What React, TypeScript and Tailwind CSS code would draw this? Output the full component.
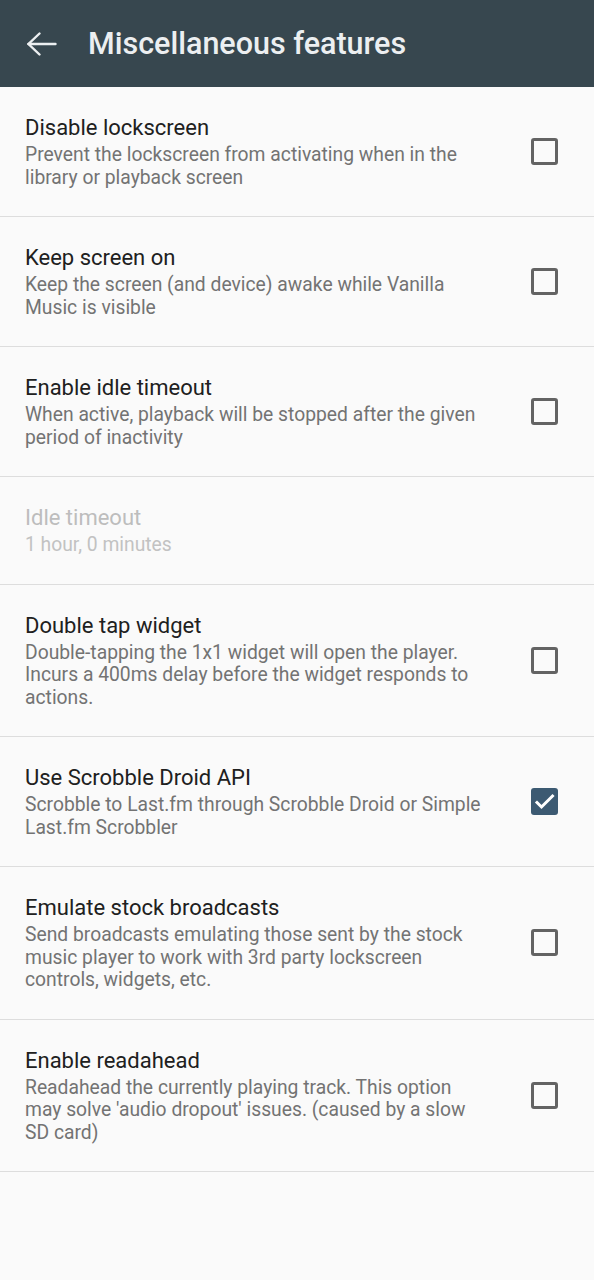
import { useState } from 'react'

interface Pref {
  key: string
  title: string
  summary: string
  checked?: boolean
  disabled?: boolean
  checkbox?: boolean
}

const prefs: Pref[] = [
  {
    key: 'disable_lockscreen',
    title: 'Disable lockscreen',
    summary: 'Prevent the lockscreen from activating when in the library or playback screen',
    checkbox: true,
  },
  {
    key: 'keep_screen_on',
    title: 'Keep screen on',
    summary: 'Keep the screen (and device) awake while Vanilla Music is visible',
    checkbox: true,
  },
  {
    key: 'use_idle_timeout',
    title: 'Enable idle timeout',
    summary: 'When active, playback will be stopped after the given period of inactivity',
    checkbox: true,
  },
  {
    key: 'idle_timeout',
    title: 'Idle timeout',
    summary: '1 hour, 0 minutes',
    disabled: true,
  },
  {
    key: 'double_tap',
    title: 'Double tap widget',
    summary: 'Double-tapping the 1x1 widget will open the player. Incurs a 400ms delay before the widget responds to actions.',
    checkbox: true,
  },
  {
    key: 'scrobble',
    title: 'Use Scrobble Droid API',
    summary: 'Scrobble to Last.fm through Scrobble Droid or Simple Last.fm Scrobbler',
    checkbox: true,
    checked: true,
  },
  {
    key: 'stock_broadcast',
    title: 'Emulate stock broadcasts',
    summary: 'Send broadcasts emulating those sent by the stock music player to work with 3rd party lockscreen controls, widgets, etc.',
    checkbox: true,
  },
  {
    key: 'readahead',
    title: 'Enable readahead',
    summary: "Readahead the currently playing track. This option may solve 'audio dropout' issues. (caused by a slow SD card)",
    checkbox: true,
  },
]

function CheckBox({ checked }: { checked: boolean }) {
  if (checked) {
    return (
      <span className="block h-[27px] w-[27px] rounded-[3px] bg-[#3c5a72]">
        <svg viewBox="0 0 27 27" className="h-[27px] w-[27px]" fill="none" stroke="#ffffff" strokeWidth="3" strokeLinecap="square">
          <path d="M6 14.5l4.5 4.5L21.5 8" />
        </svg>
      </span>
    )
  }
  return <span className="block h-[27px] w-[27px] rounded-[3px] border-[3px] border-[#636363]" />
}

function PrefRow({ pref }: { pref: Pref }) {
  const [checked, setChecked] = useState(!!pref.checked)

  return (
    <div
      className="flex items-center border-b border-[#dddddd] pl-[25px] pt-[27px] pb-[27px]"
      onClick={() => pref.checkbox && setChecked(!checked)}
    >
      <div className="w-[466px]">
        <div className={`text-[22px] leading-[28px] ${pref.disabled ? 'text-[#bdbdbd]' : 'text-[#202020]'}`}>
          {pref.title}
        </div>
        <div className={`mt-[2px] text-[19.3px] leading-[22.5px] ${pref.disabled ? 'text-[#c2c2c2]' : 'text-[#737373]'}`}>
          {pref.summary}
        </div>
      </div>
      {pref.checkbox && (
        <div className="ml-auto mr-[36px]">
          <CheckBox checked={checked} />
        </div>
      )}
    </div>
  )
}

export default function App() {
  return (
    <div className="min-h-[1280px] bg-[#fafafa]" style={{ fontFamily: 'Roboto, "Noto Sans", sans-serif' }}>
      {/* Toolbar */}
      <header className="flex h-[87px] items-center bg-[#37474f]">
        <svg viewBox="0 0 30 24" className="ml-[27px] h-[24px] w-[30px]" fill="none" stroke="#eceff1" strokeWidth="2.4" strokeLinecap="round">
          <path d="M1.5 12H28.5" />
          <path d="M12.5 1.5L1.5 12l11 10.5" />
        </svg>
        <h1 className="ml-[31px] text-[30.5px] font-medium text-[#eceff1]">Miscellaneous features</h1>
      </header>

      {prefs.map((p) => (
        <PrefRow key={p.key} pref={p} />
      ))}
    </div>
  )
}
